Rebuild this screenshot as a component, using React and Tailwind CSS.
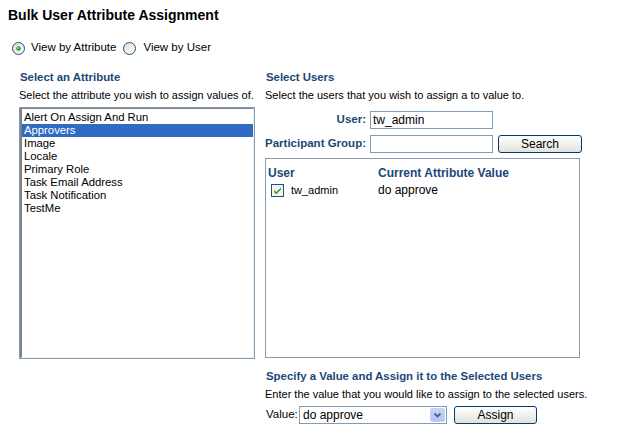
import React from "react";

const attributes = [
  "Alert On Assign And Run",
  "Approvers",
  "Image",
  "Locale",
  "Primary Role",
  "Task Email Address",
  "Task Notification",
  "TestMe",
];

function Radio({ checked }) {
  return (
    <svg width="13" height="13" viewBox="0 0 13 13" className="shrink-0">
      <defs>
        <linearGradient id={checked ? "rg1" : "rg0"} x1="0" y1="0" x2="1" y2="1">
          <stop offset="0" stopColor="#dcdcd7" />
          <stop offset="1" stopColor="#ffffff" />
        </linearGradient>
      </defs>
      <circle cx="6.5" cy="6.5" r="6" fill={`url(#${checked ? "rg1" : "rg0"})`} stroke="#1c5180" strokeWidth="1" />
      {checked && <circle cx="6.5" cy="6.5" r="2.3" fill="#2fa52f" />}
      {checked && <circle cx="6" cy="6" r="0.9" fill="#8fe08f" />}
    </svg>
  );
}

function Checkbox() {
  return (
    <svg width="13" height="13" viewBox="0 0 13 13" className="shrink-0">
      <rect x="0.5" y="0.5" width="12" height="12" fill="#f4f4f0" stroke="#1c5180" />
      <path d="M3 6 L5.2 8.3 L10 3.6 L10 5.6 L5.2 10.3 L3 8 Z" fill="#21a121" />
    </svg>
  );
}

function XpButton({ children, className }) {
  return (
    <button
      className={
        "h-[18px] rounded-[3px] border border-[#003c74] bg-gradient-to-b from-white to-[#e3e3db] text-[12px] leading-none text-black " +
        className
      }
    >
      {children}
    </button>
  );
}

export default function App() {
  const blue = "text-[#1b4876]";
  return (
    <div className="w-[618px] h-[448px] bg-white px-[8px] pt-[6px] text-[11px] text-black" style={{ fontFamily: '"Liberation Sans", Arial, sans-serif' }}>
      <h1 className="text-[14px] font-bold leading-[18px]">Bulk User Attribute Assignment</h1>

      <div className="mt-[16px] flex h-[16px] items-center pl-[4px] text-[11.5px]">
        <Radio checked />
        <span className="ml-[6px]">View by Attribute</span>
        <span className="ml-[7px]"><Radio /></span>
        <span className="ml-[7px]">View by User</span>
      </div>

      <div className="mt-[14px] flex pl-[11px]">
        {/* left column */}
        <div className="w-[236px]">
          <div className={"font-bold text-[11.4px] leading-[14px] pl-[1px] " + blue}>Select an Attribute</div>
          <div className="mt-[4px] leading-[14px]">Select the attribute you wish to assign values of.</div>
          <div className="mt-[5px] h-[252px] border border-[#7f9db9]">
            <div className="h-full border-l-2 border-t border-l-[#808080] border-t-[#808080] border-r border-b border-r-[#f0f0ea] border-b-[#f0f0ea] pt-[2px] text-[11.3px]">
              {attributes.map((a) => (
                <div
                  key={a}
                  className={
                    "h-[13px] leading-[13px] pl-[2px] " +
                    (a === "Approvers" ? "bg-[#316ac5] text-white" : "")
                  }
                >
                  {a}
                </div>
              ))}
            </div>
          </div>
        </div>

        {/* right column */}
        <div className="ml-[10px] w-[340px] whitespace-nowrap">
          <div className={"font-bold text-[11.4px] leading-[14px] pl-[1px] " + blue}>Select Users</div>
          <div className="mt-[4px] leading-[14px]">Select the users that you wish to assign a to value to.</div>

          <div className="mt-[9px] flex items-center">
            <label className={"flex w-[101px] justify-end font-bold text-[11.5px] " + blue}>User:</label>
            <input
              defaultValue="tw_admin"
              className="ml-[4px] h-[18px] w-[123px] border border-[#7f9db9] px-[2px] text-[12px] outline-none"
            />
          </div>
          <div className="mt-[6px] flex items-center">
            <label className={"flex w-[101px] justify-end font-bold text-[11.5px] " + blue}>Participant Group:</label>
            <input className="ml-[4px] h-[18px] w-[123px] border border-[#7f9db9] px-[2px] text-[12px] outline-none" />
            <XpButton className="ml-[5px] w-[84px]">Search</XpButton>
          </div>

          <div className="mt-[5px] h-[200px] w-[315px] border border-[#8a9bb0] pl-[1px] pt-[7px]">
            <div className={"flex font-bold text-[12px] leading-[14px] " + blue}>
              <span className="w-[111px] pl-[1px]">User</span>
              <span>Current Attribute Value</span>
            </div>
            <div className="mt-[3px] flex items-center text-[12px] leading-[14px]">
              <div className="flex w-[111px] items-center pl-[4px]">
                <Checkbox />
                <span className="ml-[7px] text-[11px]">tw_admin</span>
              </div>
              <span>do approve</span>
            </div>
          </div>

          <div className={"mt-[11px] font-bold text-[11.4px] leading-[14px] pl-[1px] " + blue}>
            Specify a Value and Assign it to the Selected Users
          </div>
          <div className="mt-[4px] leading-[14px]">Enter the value that you would like to assign to the selected users.</div>
          <div className="mt-[5px] flex items-center text-[12px]">
            <span className="w-[34px] pl-[1px] text-[11.5px]">Value:</span>
            <div className="flex h-[18px] w-[148px] items-center justify-between border border-[#7f9db9] pl-[3px] pr-[1px]">
              <span>do approve</span>
              <svg width="15" height="14" viewBox="0 0 15 14">
                <defs>
                  <linearGradient id="sel" x1="0" y1="0" x2="0" y2="1">
                    <stop offset="0" stopColor="#c6d6f7" />
                    <stop offset="1" stopColor="#b0c6f2" />
                  </linearGradient>
                </defs>
                <rect x="0.5" y="0.5" width="14" height="13" rx="1.5" fill="url(#sel)" stroke="#c0d1f5" />
                <path d="M4.5 5.5 L7.5 8.5 L10.5 5.5" fill="none" stroke="#4d6185" strokeWidth="1.8" />
              </svg>
            </div>
            <XpButton className="ml-[7px] w-[83px]">Assign</XpButton>
          </div>
        </div>
      </div>
    </div>
  );
}
